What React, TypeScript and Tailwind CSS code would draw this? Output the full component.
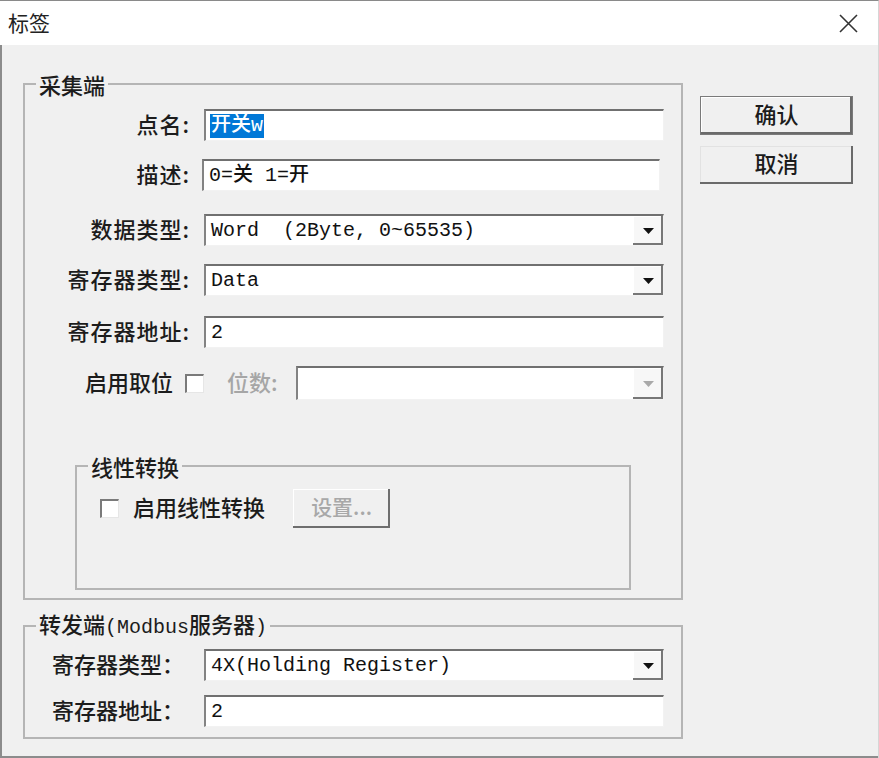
import type { ReactNode } from "react";

// 标签 dialog (Windows classic look)

function Sunken({ children, className = "" }: { children?: ReactNode; className?: string }) {
  return (
    <div
      className={`flex h-[32px] items-center bg-white border-t-2 border-l-2 border-r border-b border-t-[#707070] border-l-[#838383] border-r-[#f2f2f2] border-b-[#f2f2f2] ${className}`}
    >
      {children}
    </div>
  );
}

function Value({ children }: { children: ReactNode }) {
  return (
    <span className="flex-1 whitespace-pre pl-[5px] text-[20px] leading-none text-[#111] font-[family-name:'Liberation_Mono','Noto_Sans_CJK_SC',monospace]">
      {children}
    </span>
  );
}

function Combo({ value, disabled = false, className = "" }: { value?: string; disabled?: boolean; className?: string }) {
  return (
    <Sunken className={className}>
      <Value>{value}</Value>
      <div className="flex h-full w-[30px] items-center justify-center bg-[#f7f7f7] shadow-[inset_-2px_-2px_0_#777777,inset_1px_1px_0_#ffffff]">
        <svg width="11" height="6" viewBox="0 0 11 6">
          <path d="M0 0h11L5.5 6z" fill={disabled ? "#a9a9a9" : "#111111"} />
        </svg>
      </div>
    </Sunken>
  );
}

function Check({ className = "" }: { className?: string }) {
  return (
    <div
      className={`h-[19px] w-[19px] shrink-0 bg-white border-t-2 border-l-2 border-r border-b border-t-[#7a7a7a] border-l-[#7a7a7a] border-r-[#e6e6e6] border-b-[#e6e6e6] ${className}`}
    />
  );
}

function Row({ label, children, className = "" }: { label: string; children: ReactNode; className?: string }) {
  return (
    <div className={`flex h-[32px] items-center ${className}`}>
      <span className="mb-[5px] w-[179px] shrink-0 pr-[14px] text-right text-[22px] leading-none tracking-[1px]">{label}</span>
      {children}
    </div>
  );
}

export default function App() {
  return (
    <div className="flex h-[758px] w-[879px] flex-col overflow-hidden border-t border-t-[#8a8a8a] border-r border-r-[#d6d6d6] bg-[#f0f0f0] font-medium text-[#1c1c1c] font-['Noto_Sans_CJK_SC',sans-serif]">
      {/* title bar */}
      <div className="flex h-[44px] shrink-0 items-center justify-between bg-white pl-[8px] pr-[20px]">
        <span className="mb-[2px] text-[21px] font-normal leading-none text-[#222]">标签</span>
        <svg width="19" height="19" viewBox="0 0 19 19">
          <path d="M1 1L18 18M18 1L1 18" stroke="#333" strokeWidth="1.6" />
        </svg>
      </div>

      {/* body */}
      <div className="flex flex-1 border-l-2 border-b-2 border-l-[#8c8c8c] border-b-[#8c8c8c] pl-[21px] pt-[28px]">
        <div className="w-[660px] shrink-0">
          <fieldset className="h-[527px] w-[660px] border-2 border-[#b5b5b5]">
            <legend className="ml-[11px] px-[3px] text-[22px] leading-[22px]">采集端</legend>
            <div className="pt-[14px]">
              <Row label="点名:">
                <Sunken className="w-[460px]">
                  <span className="ml-[4px] whitespace-pre bg-[#0078d7] px-[1px] py-[2px] text-[20px] leading-none text-white font-[family-name:'Liberation_Mono','Noto_Sans_CJK_SC',monospace]">
                    开关w
                  </span>
                </Sunken>
              </Row>
              <Row label="描述:" className="mt-[18px]">
                <Sunken className="ml-[-2px] w-[458px]">
                  <Value>0=关 1=开</Value>
                </Sunken>
              </Row>
              <Row label="数据类型:" className="mt-[23px]">
                <Combo className="w-[460px]" value="Word  (2Byte, 0~65535)" />
              </Row>
              <Row label="寄存器类型:" className="mt-[18px]">
                <Combo className="w-[460px]" value="Data" />
              </Row>
              <Row label="寄存器地址:" className="mt-[20px]">
                <Sunken className="w-[460px]">
                  <Value>2</Value>
                </Sunken>
              </Row>
              <div className="mt-[18px] flex h-[34px] items-center">
                <div className="flex w-[179px] shrink-0 items-center justify-end">
                  <span className="mb-[5px] text-[22px] leading-none">启用取位</span>
                  <Check className="ml-[12px]" />
                </div>
                <div className="flex w-[460px] items-center">
                  <span className="mb-[5px] ml-[23px] text-[22px] leading-none text-[#a6a6a6]">位数:</span>
                  <Combo className="ml-auto h-[34px] w-[368px]" disabled />
                </div>
              </div>

              <fieldset className="ml-[50px] mt-[55px] h-[135px] w-[556px] border-2 border-[#b5b5b5]">
                <legend className="ml-[11px] px-[3px] text-[22px] leading-[22px]">线性转换</legend>
                <div className="mt-[12px] flex h-[39px] items-center pl-[23px]">
                  <Check />
                  <span className="mb-[5px] ml-[14px] text-[22px] leading-none">启用线性转换</span>
                  <div className="ml-[28px] flex h-[39px] w-[97px] items-center justify-center bg-[#f0f0f0] pb-[5px] text-[21px] leading-none text-[#a8a8a8] shadow-[inset_-2px_-2px_0_#6e6e6e,inset_1px_1px_0_#ffffff]">
                    设置...
                  </div>
                </div>
              </fieldset>
            </div>
          </fieldset>

          <fieldset className="mt-[12px] h-[127px] w-[660px] border-2 border-[#b5b5b5]">
            <legend className="ml-[11px] px-[3px] text-[22px] leading-[22px]">
              转发端
              <span className="text-[20px] font-[family-name:'Liberation_Mono',monospace]">(Modbus</span>
              服务器
              <span className="text-[20px] font-[family-name:'Liberation_Mono',monospace]">)</span>
            </legend>
            <div className="pt-[10px]">
              <div className="flex h-[32px] items-center">
                <span className="mb-[5px] w-[179px] shrink-0 pl-[27px] text-[22px] leading-none">寄存器类型：</span>
                <Combo className="w-[460px]" value="4X(Holding Register)" />
              </div>
              <div className="mt-[14px] flex h-[32px] items-center">
                <span className="mb-[5px] w-[179px] shrink-0 pl-[27px] text-[22px] leading-none">寄存器地址：</span>
                <Sunken className="w-[460px]">
                  <Value>2</Value>
                </Sunken>
              </div>
            </div>
          </fieldset>
        </div>

        <div className="ml-[17px] mt-[23px] flex flex-col gap-[11px]">
          <button className="flex h-[39px] w-[153px] items-center justify-center border border-[#7a7a7a] bg-[#f0f0f0] pb-[6px] text-[22px] leading-none shadow-[inset_-2px_-2px_0_#6a6a6a,inset_1px_1px_0_#ffffff]">
            确认
          </button>
          <button className="flex h-[38px] w-[153px] items-center justify-center bg-[#f0f0f0] pb-[6px] text-[22px] leading-none shadow-[inset_-2px_-2px_0_#6a6a6a,inset_1px_1px_0_#e2e2e2]">
            取消
          </button>
        </div>
      </div>
    </div>
  );
}
